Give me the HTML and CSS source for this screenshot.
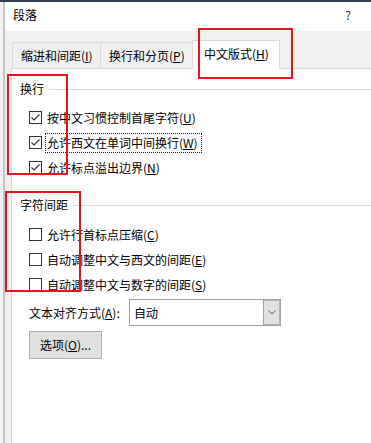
FILE: index.html
```html
<!DOCTYPE html>
<html lang="zh-CN">
<head>
    <meta charset="UTF-8">
    <meta name="viewport" content="width=device-width, initial-scale=1.0">
    <title>段落</title>
    <link rel="stylesheet" href="styles.css">
</head>
<body>
    <div class="topline"></div>
    <div class="screen">
        <div class="edge"></div>
        <div class="dialog">
            <div class="titlebar">
                <span>段落</span>
                <span class="help">?</span>
            </div>

            <!-- tabs -->
            <div class="tabs">
                <div class="tab tab-1">缩进和间距(<u>I</u>)</div>
                <div class="tab tab-2">换行和分页(<u>P</u>)</div>
                <div class="tab tab-active">中文版式(<u>H</u>)</div>
            </div>

            <div class="panel">
                <div class="group-title"><span>换行</span><span class="rule"></span></div>
                <div class="check first">
                    <span class="box"><svg width="11" height="11" viewBox="0 0 11 11"><path d="M1.5 5.5 L4 8 L9.5 2.5" fill="none" stroke="#333" stroke-width="1.2"/></svg></span>
                    <span class="text">按中文习惯控制首尾字符(<u>U</u>)</span>
                </div>
                <div class="check">
                    <span class="box"><svg width="11" height="11" viewBox="0 0 11 11"><path d="M1.5 5.5 L4 8 L9.5 2.5" fill="none" stroke="#333" stroke-width="1.2"/></svg></span>
                    <span class="text focus">允许西文在单词中间换行(<u>W</u>)</span>
                </div>
                <div class="check">
                    <span class="box"><svg width="11" height="11" viewBox="0 0 11 11"><path d="M1.5 5.5 L4 8 L9.5 2.5" fill="none" stroke="#333" stroke-width="1.2"/></svg></span>
                    <span class="text">允许标点溢出边界(<u>N</u>)</span>
                </div>

                <div class="group-title second"><span>字符间距</span><span class="rule"></span></div>
                <div class="check first-2">
                    <span class="box"></span>
                    <span class="text">允许行首标点压缩(<u>C</u>)</span>
                </div>
                <div class="check">
                    <span class="box"></span>
                    <span class="text">自动调整中文与西文的间距(<u>E</u>)</span>
                </div>
                <div class="check">
                    <span class="box"></span>
                    <span class="text">自动调整中文与数字的间距(<u>S</u>)</span>
                </div>

                <div class="align-row">
                    <span class="align-label">文本对齐方式(<u>A</u>):</span>
                    <div class="select">
                        <span class="select-value">自动</span>
                        <span class="select-btn"><svg width="8" height="5" viewBox="0 0 8 5"><path d="M0.5 0.5 L4 4 L7.5 0.5" fill="none" stroke="#555" stroke-width="1"/></svg></span>
                    </div>
                </div>
                <div class="btn">选项(<u>O</u>)...</div>
            </div>
        </div>
    </div>

    <!-- red annotation boxes -->
    <div class="mark mark-tab"></div>
    <div class="mark mark-wrap"></div>
    <div class="mark mark-spacing"></div>
</body>
</html>
```

FILE: styles.css
```css
*{
    margin: 0px;
    padding: 0px;
    box-sizing: border-box;
}
body{
    width: 371px;
    height: 443px;
    overflow: hidden;
    position: relative;
    background: #ffffff;
    font-family: "Noto Sans CJK SC", "Microsoft YaHei", sans-serif;
    font-size: 12px;
    line-height: 16px;
    color: #000;
}
u{
    text-decoration: underline;
    text-underline-offset: 1px;
}
.topline{
    height: 2px;
    background: #34404e;
}
.screen{
    display: flex;
    height: 441px;
}
.edge{
    width: 3px;
    background: #f3f3f3;
}
.dialog{
    flex: 1;
    display: flex;
    flex-direction: column;
    background: #f0f0f0;
    border-left: 2px solid #c6c6c6;
}
.titlebar{
    height: 29px;
    background: #ffffff;
    display: flex;
    justify-content: space-between;
    align-items: flex-start;
    padding: 5px 20px 0 8px;
}
.help{
    color: #333;
}

/* tabs */
.tabs{
    height: 37px;
    padding: 9px 0 0 7px;
    display: flex;
    align-items: flex-end;
}
.tab{
    height: 26px;
    border: 1px solid #d9d9d9;
    border-bottom: none;
    line-height: 25px;
    padding-left: 8px;
    white-space: nowrap;
}
.tab-1{
    width: 89px;
}
.tab-2{
    width: 93px;
    margin-left: -1px;
}
.tab-active{
    position: relative;
    width: 88px;
    height: 29px;
    margin-left: -1px;
    margin-bottom: -1px;
    background: #ffffff;
    padding-left: 11px;
    line-height: 26px;
}

.panel{
    flex: 1;
    margin-left: 6px;
    background: #ffffff;
    border-top: 1px solid #d9d9d9;
    border-left: 1px solid #d9d9d9;
    padding: 12px 0 0 8px;
}
.group-title{
    display: flex;
    align-items: center;
    height: 16px;
}
.group-title.second{
    margin-top: 17px;
}
.rule{
    flex: 1;
    height: 1px;
    margin-left: 5px;
    background: #dcdcdc;
}
.check{
    display: flex;
    align-items: center;
    height: 25px;
    margin-left: 9px;
}
.check.first{
    margin-top: 8px;
}
.check.first-2{
    margin-top: 9px;
}
.box{
    width: 13px;
    height: 13px;
    border: 1px solid #333;
    background: #fff;
    display: flex;
}
.text{
    margin-left: 3px;
    border: 1px dotted transparent;
    padding: 1px 3px 1px 1px;
    white-space: nowrap;
}
.text.focus{
    border-color: #222;
}

.align-row{
    display: flex;
    align-items: center;
    margin: 2px 0 0 9px;
}
.align-label{
    width: 100px;
    white-space: nowrap;
}
.select{
    width: 152px;
    height: 27px;
    border: 1px solid #a0a0a0;
    display: flex;
}
.select-value{
    flex: 1;
    padding-left: 4px;
    line-height: 25px;
}
.select-btn{
    width: 17px;
    background: #e1e1e1;
    border: 1px solid #b0b0b0;
    border-left-color: #a0a0a0;
    display: flex;
    align-items: center;
    justify-content: center;
}
.btn{
    width: 73px;
    height: 28px;
    margin: 5px 0 0 9px;
    border: 1px solid #adadad;
    background: #e1e1e1;
    padding-left: 10px;
    line-height: 26px;
    white-space: nowrap;
}

.mark{
    position: absolute;
    border: 2px solid #e8141c;
}
.mark-tab{
    left: 198px;
    top: 28px;
    width: 95px;
    height: 51px;
}
.mark-wrap{
    left: 7px;
    top: 74px;
    width: 61px;
    height: 101px;
}
.mark-spacing{
    left: 5px;
    top: 191px;
    width: 76px;
    height: 101px;
}
```
